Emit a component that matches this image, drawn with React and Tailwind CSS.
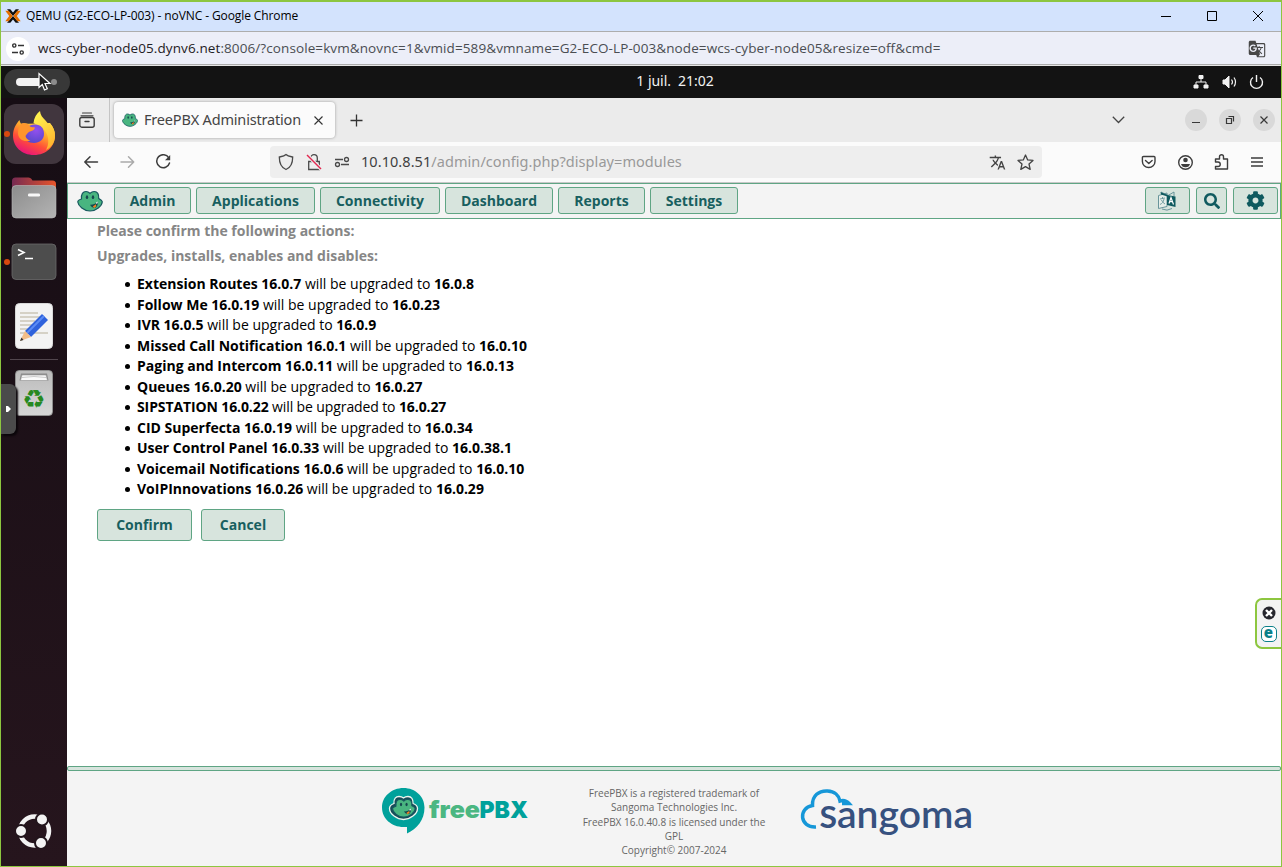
import React from "react";
import { MdGTranslate, MdTranslate } from "react-icons/md";
import { FaCog, FaSearch } from "react-icons/fa";

const menus = [
  ["Admin", "w-[77px]"],
  ["Applications", "w-[119px]"],
  ["Connectivity", "w-[120px]"],
  ["Dashboard", "w-[108px]"],
  ["Reports", "w-[87px]"],
  ["Settings", "w-[88px]"],
];

const upgrades = [
  ["Extension Routes 16.0.7", "16.0.8"],
  ["Follow Me 16.0.19", "16.0.23"],
  ["IVR 16.0.5", "16.0.9"],
  ["Missed Call Notification 16.0.1", "16.0.10"],
  ["Paging and Intercom 16.0.11", "16.0.13"],
  ["Queues 16.0.20", "16.0.27"],
  ["SIPSTATION 16.0.22", "16.0.27", "tracking-[-0.11px]"],
  ["CID Superfecta 16.0.19", "16.0.34"],
  ["User Control Panel 16.0.33", "16.0.38.1"],
  ["Voicemail Notifications 16.0.6", "16.0.10"],
  ["VoIPInnovations 16.0.26", "16.0.29"],
];

function FrogShape() {
  return (
    <>
      <path d="M4.500 9C4 4 6 1.500 9 1.500c2 0 3 .8 4 1.800 1-1 2-1.800 4.200-1.800C20.500 1.500 22 4 21.700 8.500c1.500.8 3.500 1.800 3.600 3.300C25 16 19 21 13 21S1.200 16 .8 12C.7 10.500 2.500 9.500 4.500 9z" fill="#49b580" stroke="#17585f" strokeWidth="1.200" />
      <ellipse cx="10" cy="7.200" rx="1.200" ry="1.900" fill="#17484f" />
      <ellipse cx="16" cy="7.200" rx="1.200" ry="1.900" fill="#17484f" />
      <path d="M13 14.700c2.500.3 5.500-.8 7.800-3 .3 3.300-1 6-3.500 6-1.800 0-3.300-1.200-4.300-3z" fill="#17484f" />
      <path d="M15.800 16.500l3-2.200.6 2-2.100 1.700z" fill="#f58220" />
      <path d="M19 12.800l1.500-1.300.2 1.600-1.200.8z" fill="#fff" />
    </>
  );
}

function Frog({ className }) {
  return (
    <svg className={className} viewBox="0 0 26 22" preserveAspectRatio="none">
      <FrogShape />
    </svg>
  );
}

function TitleBar() {
  return (
    <div className="flex h-[30px] items-center border-b border-[#adadad] bg-[#d3e3fd] pb-px pl-[4px] text-black">
      <svg className="h-4 w-4" viewBox="0 0 16 16">
        <path d="M2 1.200h3.300L8 4.400l2.700-3.200H14L8 8zM2 14.800h3.300L8 11.600l2.700 3.200H14L8 8z" fill="#111" />
        <path d="M.3 2.800h3.400L7.600 8l-3.900 5.200H.3L4.200 8zM15.700 2.800h-3.400L8.400 8l3.900 5.200h3.400L11.800 8z" fill="#e57000" />
      </svg>
      <span className="ml-[5px] whitespace-nowrap font-['Open_Sans',sans-serif] text-[12px] tracking-[-0.1px]">
        QEMU (G2-ECO-LP-003) - noVNC - Google Chrome
      </span>
      <svg className="ml-auto mr-[17px] h-[12px] w-[104px]" viewBox="0 0 104 12" fill="none" stroke="#000" strokeWidth="1">
        <path d="M1 6.500h10M47.500 1.500h9v9h-9zM93 1l10 10M103 1L93 11" />
      </svg>
    </div>
  );
}

function AddressBar() {
  return (
    <div className="flex h-[34px] items-center border-b border-[#e6e6e6] bg-[#eceef8] pl-[5px] pr-[15px] shadow-[inset_0_-1px_0_#ababab]">
      <div className="flex h-6 w-6 items-center justify-center rounded-full bg-white">
        <svg className="h-[12px] w-[12px]" viewBox="0 0 12 12" fill="none" stroke="#333" strokeWidth="1.400">
          <circle cx="2.300" cy="2.500" r="1.600" />
          <path d="M6 2.500h6M0 9.500h6" />
          <circle cx="9.700" cy="9.500" r="1.600" />
        </svg>
      </div>
      <span className="ml-[8px] whitespace-nowrap font-['Open_Sans',sans-serif] text-[13.500px] tracking-[0.097px] text-[#4a4d52]">
        <span className="text-[#1f2023]">wcs-cyber-node05.dynv6.net</span>:8006/?console=kvm&novnc=1&vmid=589&vmname=G2-ECO-LP-003&node=wcs-cyber-node05&resize=off&cmd=
      </span>
      <MdGTranslate className="ml-auto h-[18px] w-[18px] text-[#474747]" />
    </div>
  );
}

function TopPanel() {
  return (
    <div className="grid h-8 grid-cols-[1fr_auto_1fr] items-center bg-[#131313] pl-[3px] pr-[16px]">
      <div className="flex h-[26px] w-[66px] items-center rounded-full bg-[#383838] pl-[12px]">
        <span className="h-2 w-[30px] rounded-full bg-[#f2f2f2]" />
        <span className="ml-[5px] h-[6px] w-[6px] rounded-full bg-[#8c8c8c]" />
      </div>
      <span className="ml-[81px] whitespace-pre pb-[4px] font-['Noto_Sans',sans-serif] text-[14px] tracking-[-0.05px] text-[#f2f2f2]">1 juil.  21:02</span>
      <svg className="ml-auto h-4 w-[72px]" viewBox="0 0 72 16" fill="none" stroke="#f2f2f2">
        <path d="M6 1.500h4v3H6zM1 11h4v3H1zM11 11h4v3h-4z" fill="#f2f2f2" />
        <path d="M8 5v3M3 11V8h10v3" />
        <path d="M30 6h2l4-4v12l-4-4h-2z" fill="#f2f2f2" />
        <path d="M38.500 5.500q2 2.500 0 5M41 3.500q3 4.500 0 9" strokeWidth="1.200" />
        <path d="M60 3.500a6 6 0 1 0 7 0M63.500 1v7" strokeWidth="1.400" />
      </svg>
    </div>
  );
}

function FirefoxLogo() {
  return (
    <svg className="h-[46px] w-[44px]" viewBox="0 0 44 46">
      <defs>
        <linearGradient id="ffBody" x1=".85" y1=".1" x2=".35" y2="1">
          <stop offset="0" stopColor="#ffe14a" />
          <stop offset=".35" stopColor="#ffa62b" />
          <stop offset=".65" stopColor="#ff4f38" />
          <stop offset="1" stopColor="#e8147a" />
        </linearGradient>
        <radialGradient id="ffGlobe" cx=".6" cy=".3" r=".8">
          <stop offset="0" stopColor="#9350ee" />
          <stop offset="1" stopColor="#5247c8" />
        </radialGradient>
        <linearGradient id="ffFlame" x1=".3" y1="0" x2=".8" y2="1">
          <stop offset="0" stopColor="#fff450" />
          <stop offset="1" stopColor="#ffb02c" />
        </linearGradient>
      </defs>
      <path d="M7.500 9c.3 2 1 3 1.800 3.800 2.500-.8 5-.6 7.200 0L38 12c3.500 4.500 5 8 5 12.500C43 35.500 34.500 44 22 44S1 35.500 1 24.500C1 18 4 13 7.500 9z" fill="url(#ffBody)" />
      <path d="M21.500 12c.5-5.500 3-9 6.500-12 .3 4 2.500 6.500 5.500 9.500 1.500 1.500 2.500 3 3 5l1.200-2.500C41.500 16 43 20 43 25c0 6-4 12-9 14 3-5 3.500-13-1-19-2-3-6-5.500-11.500-8z" fill="url(#ffFlame)" />
      <path d="M12 23.500c0-6 5-10 11-10s9 4 9 9.500-4.500 9-10 9-10-3-10-8.500z" fill="url(#ffGlobe)" />
      <path d="M9.300 12.800c4.200-1.200 6.700.2 8.200 2.200 1 1.300 4 1.300 5.500 1.500-.5 3-3.500 3.300-6 4.500-1.500.8-2.200 2.500-3.500 4 .5 2.500 2.500 4 5 4.500-6.500 2-12-1-12.500-7C6 18.500 7 14.500 9.300 12.800z" fill="#ff952d" />
    </svg>
  );
}

function Dock() {
  return (
    <aside className="flex w-[66px] shrink-0 flex-col items-center bg-linear-to-b from-[#160d14] to-[#26151d]">
      <div className="ml-[-1px] mt-[6px] flex h-[60px] w-[60px] items-center justify-center rounded-[12px] bg-[#41363e]">
        <FirefoxLogo />
      </div>
      <svg className="mt-[13px] h-[42px] w-[46px]" viewBox="0 0 46 42">
        <defs>
          <linearGradient id="folderBack"><stop offset="0" stopColor="#762a52" /><stop offset="1" stopColor="#e8552a" /></linearGradient>
          <linearGradient id="folderFront" x1="0" y1="0" x2="1" y2="1"><stop offset="0" stopColor="#8c8c8c" /><stop offset="1" stopColor="#b4b4b4" /></linearGradient>
        </defs>
        <path d="M1 15V4q0-3.500 3.500-3.500h13q2 0 3 1.500l1 1.500h20q3.500 0 3.500 3.500v8z" fill="url(#folderBack)" />
        <rect x="1" y="8.500" width="44" height="32.500" rx="4" fill="url(#folderFront)" stroke="#bbb" strokeWidth=".6" />
        <rect x="17" y="16.500" width="12" height="3" rx="1.300" fill="#f7f7f7" />
      </svg>
      <svg className="mt-[24px] h-[38px] w-[46px]" viewBox="0 0 46 38">
        <rect x="1" y="1" width="44" height="35.500" rx="4" fill="#4d4d4d" stroke="#6b6b6b" strokeWidth=".8" />
        <path d="M7 6.500l6 3-6 3M14 15.500h8" fill="none" stroke="#fff" strokeWidth="1.600" />
      </svg>
      <svg className="mt-[22px] h-[46px] w-[38px]" viewBox="0 0 38 46">
        <rect x=".5" y=".5" width="37" height="45" rx="4" fill="#f3f3f3" stroke="#d8d8d8" />
        <path d="M5 10h18M5 14h20M5 18h15M5 22h18M5 26h10M5 30h28" stroke="#cbc6b8" strokeWidth="1.600" />
        <path d="M10 28L27 11l6 6-17 17z" fill="#2f62dc" />
        <path d="M12 30l17-17" stroke="#5b8cf5" strokeWidth="2" />
        <path d="M10 28l6 6-11 4z" fill="#f1bd88" />
        <path d="M6.500 34.500L5 38l3.500-1z" fill="#333" />
      </svg>
      <div className="mt-[10px] h-px w-12 bg-[#51464d]" />
      <div className="mt-[10px] flex h-[46px] w-[38px] flex-col items-center rounded-[4px] border border-[#8f8f8f] bg-linear-to-b from-[#bcbcbc] to-[#d6d6d6] pt-[2px]">
        <svg className="h-[8px] w-[30px] shrink-0" viewBox="0 0 30 8">
          <path d="M2 .5h26l1.500 7H.5z" fill="#8a8a8a" />
          <path d="M3 2h24l1.500 5.500h-27z" fill="#fafafa" stroke="#999" strokeWidth=".6" />
          <path d="M3 4.500q12-2 24 0" fill="none" stroke="#aaa" strokeWidth=".6" />
        </svg>
        <span className="mt-[6px] font-['DejaVu_Sans',sans-serif] text-[26px] leading-[24px] text-[#26891f]">♻</span>
      </div>
      <svg className="mb-[17px] mt-auto h-[36px] w-[36px]" viewBox="0 0 36 36">
        <circle cx="18.500" cy="18" r="14.500" fill="none" stroke="#f3f3f3" strokeWidth="4.500" />
        <g fill="#f3f3f3" stroke="#22151c" strokeWidth="2">
          <circle cx="5" cy="18" r="6" />
          <circle cx="26" cy="6.500" r="6" />
          <circle cx="25" cy="30" r="6" />
        </g>
      </svg>
    </aside>
  );
}

function TabStrip() {
  return (
    <div className="flex h-11 shrink-0 items-center bg-[#ebebeb] pr-[6px]">
      <div className="flex h-11 w-[43px] items-center justify-center border-r border-[#c4c4c4] pr-[2px]">
        <svg className="h-4 w-4" viewBox="0 0 16 16" fill="none" stroke="#3d3d3d" strokeWidth="1.400" strokeLinecap="round">
          <path d="M3.500 1h9M2 3.800h12" strokeWidth="1.200" />
          <rect x=".8" y="5.500" width="14.400" height="9.700" rx="2" />
          <path d="M6 9.500h4" />
        </svg>
      </div>
      <div className="ml-[4px] flex h-[36px] w-[221px] items-center rounded-[4px] bg-[#fbfbfb] pl-[8px] shadow-[0_0_3px_#999]">
        <Frog className="h-[14px] w-[16px]" />
        <span className="ml-[6px] whitespace-nowrap font-['Noto_Sans',sans-serif] text-[14.500px] tracking-[-0.18px] text-[#444]">FreePBX Administration</span>
        <svg className="ml-auto mr-[12px] h-[9px] w-[9px]" viewBox="0 0 9 9" stroke="#333" strokeWidth="1.100"><path d="M.5.5l8 8M8.500.5l-8 8" /></svg>
      </div>
      <svg className="ml-[15px] h-[13px] w-[13px]" viewBox="0 0 13 13" stroke="#333" strokeWidth="1.300"><path d="M.5 6.500h12M6.500.5v12" /></svg>
      <svg className="ml-auto mr-[60px] h-[8px] w-[13px]" viewBox="0 0 13 8" fill="none" stroke="#444" strokeWidth="1.300"><path d="M.8.800l5.700 5.700L12.200.8" /></svg>
      <div className="flex gap-[12px]">
        {["M7 13.500h8", "M7.500 9.500h5v5h-5zM9.500 7.500h5v5", "M7.500 7.500l7 7M14.500 7.500l-7 7"].map((d) => (
          <svg key={d} className="h-[22px] w-[22px] rounded-full bg-[#d9d9d9]" viewBox="0 0 22 22" fill="none" stroke="#383838" strokeWidth="1.200"><path d={d} /></svg>
        ))}
      </div>
    </div>
  );
}

function Toolbar() {
  return (
    <div className="flex h-[41px] shrink-0 items-center border-b border-[#c8c8c8] bg-[#fbfbfb] pl-[17px] pr-[18px]">
      <svg className="h-4 w-[88px]" viewBox="0 0 88 16" fill="none" stroke="#3d3d3d" strokeWidth="1.500" strokeLinecap="round" strokeLinejoin="round">
        <path d="M13.500 8H.8M6 2.800L.8 8 6 13.200" />
        <path d="M37 8h12.500M44.500 2.800L49.700 8l-5.200 5.200" stroke="#aaa" />
        <path d="M84.800 3.800A6.500 6.500 0 1 0 85.500 9" />
        <path d="M86.200 1v5.200H81z" fill="#3d3d3d" stroke="none" />
      </svg>
      <div className="ml-[98px] flex h-8 w-[772px] items-center rounded-[4px] bg-[#eeeeee] pl-[8px] pr-[8px]">
        <svg className="h-[18px] w-[73px]" viewBox="0 0 73 18" fill="none" stroke="#4a4a4a" strokeWidth="1.300">
          <path d="M8 1.500C6 3.300 3.500 3.500 1.300 4c0 6 1.700 10.500 6.700 12.500 5-2 6.700-6.500 6.700-12.500C12.500 3.500 10 3.300 8 1.500z" />
          <path d="M30.700 8.500h10.600v8H30.700zM32.700 8.500V5a3.300 3.300 0 0 1 6.600 0v3.500" />
          <path d="M29 2l14 14" stroke="#eee" strokeWidth="3.500" />
          <path d="M29 2l14 14" stroke="#e22850" strokeWidth="1.400" />
          <path d="M57 6.500h8M63 11.500h8" />
          <circle cx="68.500" cy="6.500" r="2" />
          <circle cx="59.500" cy="11.500" r="2" />
        </svg>
        <span className="ml-[10px] whitespace-nowrap font-['Noto_Sans',sans-serif] text-[14.500px] tracking-[0.06px] text-[#999]">
          <span className="text-[#3f3f3f]">10.10.8.51</span>/admin/config.php?display=modules
        </span>
        <MdTranslate className="ml-auto h-[17px] w-[17px] text-[#444]" />
        <svg className="ml-[11px] h-[17px] w-[17px]" viewBox="0 0 17 17" fill="none" stroke="#444" strokeWidth="1.300" strokeLinejoin="round">
          <path d="M8.500 1l2.200 4.900 5.300.5-4 3.600 1.200 5.400-4.700-2.800-4.700 2.800L5 10 1 6.400l5.300-.5z" />
        </svg>
      </div>
      <svg className="ml-auto h-[18px] w-[122px]" viewBox="0 0 122 18" fill="none" stroke="#3d3d3d" strokeWidth="1.400" strokeLinecap="round" strokeLinejoin="round">
        <path d="M2.500 3.500H13q1 0 1 1V8.500a6.300 6 0 0 1-12.600 0V4.500q0-1 1.100-1zM4.500 7.500l3.300 3 3.300-3" />
        <circle cx="44.500" cy="9.500" r="6.800" />
        <circle cx="44.500" cy="7" r="2.300" fill="#3d3d3d" stroke="none" />
        <path d="M40 11h9c-.5 2-2 3.300-4.500 3.300s-4-1.300-4.500-3.300z" fill="#3d3d3d" stroke="none" />
        <path d="M74.500 9V6h4V3.700a2 2 0 0 1 4 0V6h4v10h-12v-2.500H77a2.200 2.200 0 0 0 0-4.500z" />
        <path d="M110 5h12M110 9h12M110 13h12" strokeLinecap="butt" strokeWidth="1.300" />
      </svg>
    </div>
  );
}

function PbxNav() {
  return (
    <nav className="flex h-[36px] shrink-0 items-start border border-[#5fa584] bg-[#f4f4f4] pl-[9px] pr-[2px] pt-[3px]">
      <Frog className="mt-[3px] h-[22px] w-[26px]" />
      <div className="ml-[11px] flex gap-[5px] font-['Open_Sans',sans-serif] text-[14px] font-bold text-[#185f5f]">
        {menus.map(([name, width]) => (
          <button key={name} className={`h-[27px] rounded-[3px] border border-[#5fa584] bg-[#d7e4dd] leading-[25px] ${width}`}>{name}</button>
        ))}
      </div>
      <div className="ml-auto flex gap-[6px] text-[#0f5a5f]">
        <button className="flex h-[27px] w-[45px] items-center justify-center rounded-[3px] border border-[#5fa584] bg-[#d7e4dd] pr-px">
          <svg className="h-[20px] w-[20px]" viewBox="0 0 20 20" fill="none">
            <path d="M1.500 4.500L10 2v13.500l-8.500 2z" fill="#e6eee9" stroke="#68949a" />
            <path d="M4 1l7 3.500L17 1v4" stroke="#68949a" />
            <path d="M3.500 1L10.500 4v1.500L4 3.500z" fill="#0f5a5f" />
            <path d="M10 4l8.500 1.500v10.500L10 14z" fill="#0f5a5f" />
            <path d="M12 12.500l2-6 2.500 7M12.700 10.700h2.800" stroke="#fff" strokeWidth="1.200" />
            <path d="M3 8l5-1M5.500 6v2M7 8c-.5 3-2 4.500-4 5.500M4.500 9c1 2 2 3 3.500 4" stroke="#68949a" strokeWidth=".9" />
            <path d="M5 18q5 2.500 10-.5" stroke="#68949a" />
          </svg>
        </button>
        <button className="flex h-[27px] w-[31px] items-center justify-center rounded-[3px] border border-[#5fa584] bg-[#d7e4dd]"><FaSearch className="h-[16px] w-[16px]" /></button>
        <button className="flex h-[27px] w-[45px] items-center justify-center rounded-[3px] border border-[#5fa584] bg-[#d7e4dd]"><FaCog className="h-[19px] w-[19px]" /></button>
      </div>
    </nav>
  );
}

function Content() {
  return (
    <main className="flex-1 bg-white pl-[30px] font-['Open_Sans',sans-serif] text-[14px] text-black">
      <h2 className="mt-[2px] h-[20px] font-bold leading-[20px] text-[#868686]">Please confirm the following actions:</h2>
      <h2 className="mt-[5px] h-[20px] font-bold leading-[20px] text-[#868686]">Upgrades, installs, enables and disables:</h2>
      <ul className="mt-[8px] pl-[28px]">
        {upgrades.map(([name, version, tracking]) => (
          <li key={name} className="flex h-[20.500px] items-center leading-[20.500px]">
            <span className="mr-[7px] mt-px h-[5px] w-[5px] rounded-full bg-black" />
            <p className={tracking}><b>{name}</b> will be upgraded to <b>{version}</b></p>
          </li>
        ))}
      </ul>
      <div className="mt-[9px] flex gap-[9px] font-bold text-[#185f5f]">
        <button className="h-8 w-[95px] rounded-[3px] border border-[#5fa584] bg-[#d7e4dd]">Confirm</button>
        <button className="h-8 w-[84px] rounded-[3px] border border-[#5fa584] bg-[#d7e4dd]">Cancel</button>
      </div>
    </main>
  );
}

function Footer() {
  return (
    <footer className="h-[100px] shrink-0 bg-[#f4f4f4]">
      <div className="h-[5px] rounded-[2px] border border-[#5fa584] bg-[#d7e4dd]" />
      <div className="flex pl-[315px] pt-[16px]">
        <svg className="h-[48px] w-[150px] shrink-0" viewBox="0 0 150 48">
          <path d="M21.500 1C9.500 1 0 9.500 0 20.500S9.500 40 21.500 40H25v6.500C35 42 42.500 33 42.500 20.500 42.500 9.500 33.500 1 21.500 1z" fill="#00a19b" />
          <path d="M12 16.500c-.5-5 2-7 5-7 2 0 3.300.5 4.500 1.500C22.700 10 24 9.500 26 9.500c3.500 0 5.300 2.500 5 7 2.300.8 4.500 2.500 4.500 5 0 5.500-7.500 11-14 11s-14-5.500-14-11c0-2.500 2-4.200 4.500-5z" fill="#174b58" stroke="#e9f5ee" strokeWidth="1.300" />
          <svg x="9.800" y="11" width="24" height="20" viewBox="0 0 26 22" preserveAspectRatio="none"><FrogShape /></svg>
          <text x="47" y="31" fontFamily="Inter, sans-serif" fontSize="23.500" fontWeight="900" fill="#4bb782" textLength="51" lengthAdjust="spacingAndGlyphs">free</text>
          <text x="97.500" y="31" fontFamily="Inter, sans-serif" fontSize="23.500" fontWeight="900" fill="#00a19b" textLength="48.500" lengthAdjust="spacingAndGlyphs">PBX</text>
        </svg>
        <div className="ml-[42px] mt-[-1px] w-[200px] text-center font-['Open_Sans',sans-serif] text-[10px] leading-[14.300px] text-[#666]">
          FreePBX is a registered trademark of<br />Sangoma Technologies Inc.<br />FreePBX 16.0.40.8 is licensed under the<br />GPL<br />Copyright© 2007-2024
        </div>
        <svg className="ml-[26px] h-[70px] w-[180px] shrink-0" viewBox="0 0 180 70">
          <path d="M16 40C-.5 41 -2 21 12.500 18.500 12 8.500 19 3.500 27.500 4c7 .3 11.500 4.500 12.500 10 3.500-1 7 .3 9 2.500h-7" fill="none" stroke="#1697d8" strokeWidth="3.500" />
          <text x="19.500" y="41" fontFamily="Lato, sans-serif" fontSize="31" fontWeight="700" fill="#37517f" textLength="17.500" lengthAdjust="spacingAndGlyphs">S</text>
          <text x="37" y="41" fontFamily="Lato, sans-serif" fontSize="38" fontWeight="600" fill="#37517f" textLength="136" lengthAdjust="spacingAndGlyphs">angoma</text>
        </svg>
      </div>
    </footer>
  );
}

export default function App() {
  return (
    <div className="relative flex h-[867px] w-[1282px] flex-col overflow-hidden border border-t-2 border-[#8dc63f] bg-white">
      <TitleBar />
      <AddressBar />
      <TopPanel />
      <div className="flex min-h-0 flex-1">
        <Dock />
        <div className="flex min-w-0 flex-1 flex-col">
          <TabStrip />
          <Toolbar />
          <PbxNav />
          <Content />
          <Footer />
        </div>
      </div>
      <span className="absolute left-[3px] top-[129px] h-[6px] w-[6px] rounded-full bg-[#d9480f]" />
      <span className="absolute left-[3px] top-[257px] h-[6px] w-[6px] rounded-full bg-[#d9480f]" />
      <div className="absolute left-0 top-[382px] flex h-[50px] w-[15px] items-center rounded-r-[6px] bg-[#4b4b4b] pl-[5px] shadow-[2px_2px_2px_#0b060a]">
        <svg className="h-[6px] w-[5px]" viewBox="0 0 5 6"><path d="M0 0h2l3 3-3 3H0z" fill="#fff" /></svg>
      </div>
      <svg className="absolute left-[37px] top-[70px] h-[20px] w-[14px]" viewBox="0 0 14 20">
        <path d="M1 1.500v14l3.300-3 2.200 5.500 2.800-1.200L7 11.500h5z" fill="#222" stroke="#fff" strokeWidth="1.200" />
      </svg>
      <div className="absolute -right-px top-[596px] flex h-[51px] w-[27px] flex-col items-center gap-[6px] rounded-l-[7px] border-2 border-r-0 border-[#8dc63f] bg-[#f3f3f3] pr-[2px] pt-[6px] shadow-[inset_-1px_0_0_#8dc63f]">
        <svg className="h-[14px] w-[14px] shrink-0" viewBox="0 0 14 14"><circle cx="7" cy="7" r="6.500" fill="#26262e" /><path d="M4 4l6 6M10 4l-6 6" stroke="#fff" strokeWidth="2.400" /></svg>
        <div className="flex h-[16px] w-[16px] shrink-0 items-center justify-center rounded-[5px] border-[1.500px] border-[#0b8089] bg-white pb-[3px] font-['Open_Sans',sans-serif] text-[15px] font-extrabold leading-none text-[#0b8089]">e</div>
      </div>
    </div>
  );
}
